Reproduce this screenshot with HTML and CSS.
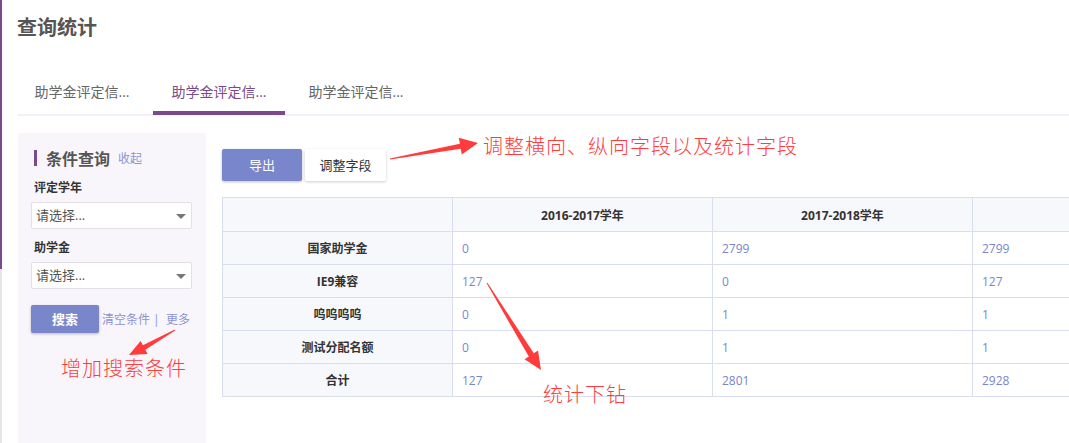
FILE: index.html
```html
<!DOCTYPE html>
<html lang="zh-CN">

<head>
    <meta charset="UTF-8">
    <meta name="viewport" content="width=device-width, initial-scale=1.0">
    <title>查询统计</title>

    <link rel="stylesheet" href="styles.css">
</head>

<body>
    <div class="edge">
        <div class="edgeTop"></div>
        <div class="edgeBottom"></div>
    </div>

    <div class="main">
        <h1 class="title">查询统计</h1>

        <div class="tabs">
            <div class="tab">助学金评定信...</div>
            <div class="tab active">助学金评定信...</div>
            <div class="tab">助学金评定信...</div>
        </div>

        <div class="content">
            <div class="filter">
                <div class="filterHead">
                    <span class="bar"></span>
                    <span class="filterTitle">条件查询</span>
                    <span class="fold">收起</span>
                </div>

                <div class="label">评定学年</div>
                <div class="select">请选择...</div>

                <div class="label">助学金</div>
                <div class="select">请选择...</div>

                <div class="searchRow">
                    <div class="btn primary search">搜索</div>
                    <span class="links">清空条件 |&nbsp; 更多</span>
                </div>
            </div>

            <div class="result">
                <div class="toolbar">
                    <div class="btn primary export">导出</div>
                    <div class="btn plain">调整字段</div>
                </div>

                <table class="stats">
                    <colgroup>
                        <col class="colName">
                        <col class="colYear">
                        <col class="colYear">
                        <col class="colYear">
                    </colgroup>
                    <thead>
                        <tr>
                            <th></th>
                            <th>2016-2017学年</th>
                            <th>2017-2018学年</th>
                            <th></th>
                        </tr>
                    </thead>
                    <tbody>
                        <tr>
                            <th>国家助学金</th>
                            <td>0</td>
                            <td>2799</td>
                            <td>2799</td>
                        </tr>
                        <tr>
                            <th>IE9兼容</th>
                            <td>127</td>
                            <td>0</td>
                            <td>127</td>
                        </tr>
                        <tr>
                            <th>呜呜呜呜</th>
                            <td>0</td>
                            <td>1</td>
                            <td>1</td>
                        </tr>
                        <tr>
                            <th>测试分配名额</th>
                            <td>0</td>
                            <td>1</td>
                            <td>1</td>
                        </tr>
                        <tr>
                            <th>合计</th>
                            <td>127</td>
                            <td>2801</td>
                            <td>2928</td>
                        </tr>
                    </tbody>
                </table>
            </div>
        </div>
    </div>

    <!-- annotations drawn over the page -->
    <span class="note noteFields">调整横向、纵向字段以及统计字段</span>
    <span class="note noteSearch">增加搜索条件</span>
    <span class="note noteDrill">统计下钻</span>

    <svg class="arrows" width="1069" height="443" viewBox="0 0 1069 443">
        <polygon points="389.9,158.5 459.9,143.7 458.8,137.8 478,143 461.8,154.6 460.7,148.7 390.1,159.5" />
        <polygon points="174.8,329.6 142.9,345.3 140.6,340.9 129,355 147.6,354.1 145.3,349.7 175.2,330.4" />
        <polygon points="486.6,283.3 528.8,356.5 524.6,359.2 541,370 538,350.6 533.8,353.3 487.4,282.7" />
    </svg>
</body>

</html>
```

FILE: styles.css
```css
html,
body {
    margin: 0;
    height: 100%;
    overflow: hidden;
}

body {
    position: relative;
    display: flex;
    background: #fff;
    font-family: "Open Sans", "Noto Sans CJK SC", sans-serif;
    color: #333;
}

.edge {
    width: 2px;
    display: flex;
    flex-direction: column;
    flex-shrink: 0;
}

.edgeTop {
    height: 269px;
    background: #7a4b8b;
}

.edgeBottom {
    flex: 1;
    background: #e6e6e6;
}

.main {
    flex: 1;
    padding-left: 16px;
    min-width: 0;
    overflow: hidden;
}

.title {
    margin: 14px 0 0 -1px;
    font-size: 20px;
    line-height: 28px;
    font-weight: bold;
    color: #555;
}

.tabs {
    display: flex;
    margin-top: 30px;
    border-bottom: 2px solid #f4eff6;
}

.tab {
    width: 132px;
    margin-right: 5px;
    padding: 10px 0 9px;
    line-height: 20px;
    font-size: 14px;
    text-align: center;
    color: #666;
    border-bottom: 4px solid transparent;
    margin-bottom: -1px;
}

.tab:first-child {
    margin-left: -2px;
}

.tab.active {
    color: #7a4b8b;
    border-bottom-color: #7a4b8b;
}

.content {
    display: flex;
    align-items: flex-start;
    margin-top: 17px;
}

.filter {
    width: 188px;
    height: 320px;
    flex-shrink: 0;
    box-sizing: border-box;
    padding: 14px 14px 0 13px;
    background: #f8f6fa;
}

.filterHead {
    display: flex;
    align-items: center;
    height: 22px;
    padding-left: 3px;
}

.bar {
    width: 3px;
    height: 16px;
    background: #7a4b8b;
    margin-right: 9px;
}

.filterTitle {
    font-size: 16px;
    font-weight: bold;
    color: #555;
}

.fold {
    margin-left: 8px;
    font-size: 12px;
    color: #8c94d6;
}

.label {
    padding-left: 3px;
    margin-top: 9px;
    font-size: 12px;
    line-height: 20px;
    font-weight: bold;
    color: #333;
}

.select {
    position: relative;
    margin-top: 4px;
    height: 27px;
    box-sizing: border-box;
    padding-left: 4px;
    line-height: 25px;
    font-size: 13px;
    color: #555;
    background: #fff;
    border: 1px solid #e3dee8;
    border-radius: 2px;
}

.select::after {
    content: "";
    position: absolute;
    right: 5px;
    top: 11px;
    border-left: 5px solid transparent;
    border-right: 5px solid transparent;
    border-top: 5px solid #777;
}

.searchRow {
    display: flex;
    align-items: center;
    margin-top: 16px;
}

.btn {
    box-sizing: border-box;
    text-align: center;
    font-size: 13px;
    border-radius: 2px;
}

.btn.primary {
    color: #fff;
    background: #7986cb;
    box-shadow: 0 1px 3px rgba(0, 0, 0, 0.25);
}

.search {
    width: 68px;
    height: 28px;
    line-height: 28px;
    font-weight: bold;
}

.links {
    margin-left: 3px;
    font-size: 12px;
    color: #8c94d6;
}

.result {
    margin-left: 16px;
    margin-top: 16px;
}

.toolbar {
    display: flex;
}

.export {
    width: 80px;
    height: 32px;
    line-height: 32px;
}

.btn.plain {
    width: 81px;
    height: 32px;
    line-height: 32px;
    margin-left: 3px;
    color: #333;
    background: #fff;
    box-shadow: 0 1px 3px rgba(0, 0, 0, 0.2);
}

.stats {
    margin-top: 16px;
    border-collapse: collapse;
    table-layout: fixed;
    width: 1010px;
    font-size: 12px;
}

.colName {
    width: 230px;
}

.colYear {
    width: 260px;
}

.stats th,
.stats td {
    height: 33px;
    padding: 0 9px;
    border: 1px solid #d9ddf0;
    box-sizing: border-box;
}

.stats th {
    text-align: center;
    font-weight: bold;
    color: #333;
    background: #f7f8fc;
}

.stats thead th {
    height: 34px;
}

.stats td {
    color: #7986cb;
    background: #fff;
}

.note {
    position: absolute;
    font-family: "Noto Sans CJK SC", sans-serif;
    font-size: 20px;
    line-height: 24px;
    font-weight: 300;
    color: #ff3b3b;
    white-space: nowrap;
    letter-spacing: 1px;
}

.noteFields {
    left: 483px;
    top: 134px;
}

.noteSearch {
    left: 61px;
    top: 356px;
}

.noteDrill {
    left: 543px;
    top: 382px;
}

.arrows {
    position: absolute;
    left: 0;
    top: 0;
    pointer-events: none;
    fill: #ff3b3b;
}
```
